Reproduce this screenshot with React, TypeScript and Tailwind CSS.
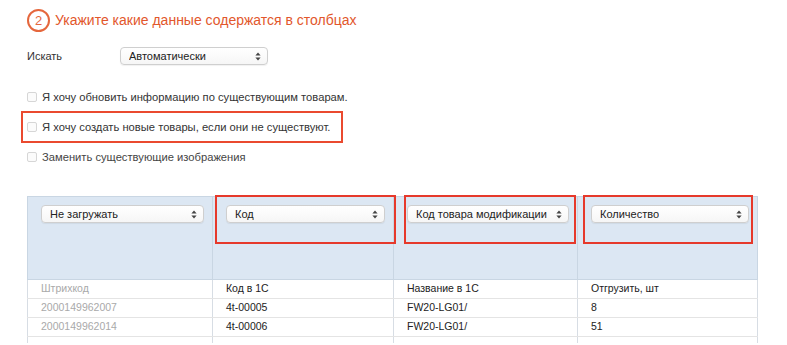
import type { ReactNode } from 'react'

// ── Small pieces ──────────────────────────────────────────────────────────────

function Arrows() {
  return (
    <svg width="6" height="9" viewBox="0 0 6 9" className="shrink-0">
      <path d="M3 0.5 L5.6 3.6 H0.4 Z" fill="#444" />
      <path d="M3 8.5 L5.6 5.4 H0.4 Z" fill="#444" />
    </svg>
  )
}

function Select({ value, className = '' }: { value: string; className?: string }) {
  return (
    <div
      className={`flex h-[18px] items-center justify-between rounded-[4px] border border-[#cfcfcf] bg-gradient-to-b from-white to-[#f6f6f6] pl-[8px] pr-[6px] text-[11px] text-[#222] shadow-[0_1px_1px_rgba(0,0,0,0.06)] ${className}`}
    >
      <span className="truncate">{value}</span>
      <Arrows />
    </div>
  )
}

function Check({ children }: { children: ReactNode }) {
  return (
    <label className="flex h-[14px] items-center gap-[5px] text-[11.2px] text-[#333]">
      <span className="h-[10px] w-[10px] shrink-0 rounded-[2px] border border-[#d6d6d6] bg-[#fbfbfb]" />
      {children}
    </label>
  )
}

// ── Data ──────────────────────────────────────────────────────────────────────

const columns = [
  { value: 'Не загружать', width: 'w-[185px]', box: null },
  { value: 'Код', width: 'w-[181px]', box: 'left-[2px] right-[-3px]' },
  { value: 'Код товара модификации', width: 'w-[184px]', box: 'left-[10px] right-[1px]' },
  { value: 'Количество', width: 'w-[180px]', box: 'left-[5px] right-[4px]' },
]

const rows = [
  ['Штрихкод', 'Код в 1С', 'Название в 1С', 'Отгрузить, шт'],
  ['2000149962007', '4t-00005', 'FW20-LG01/', '8'],
  ['2000149962014', '4t-00006', 'FW20-LG01/', '51'],
]

// ── Component ─────────────────────────────────────────────────────────────────

export default function App() {
  return (
    <div className="h-[345px] w-[787px] overflow-hidden bg-white pl-[27px] pt-[9px] font-['Liberation_Sans',Arial,sans-serif]">
      {/* Step title */}
      <div className="flex h-[23px] items-center gap-[5px]">
        <span className="flex h-[23px] w-[23px] items-center justify-center rounded-full border-2 border-[#e5673d] text-[13px] text-[#e5673d]">
          2
        </span>
        <h2 className="text-[14px] text-[#e2572c]">Укажите какие данные содержатся в столбцах</h2>
      </div>

      {/* Search mode */}
      <div className="mt-[15px] flex items-center">
        <span className="w-[93px] text-[11px] text-[#333]">Искать</span>
        <Select value="Автоматически" className="w-[148px]" />
      </div>

      {/* Options */}
      <div className="mt-[25px] flex flex-col gap-[16px]">
        <Check>Я хочу обновить информацию по существующим товарам.</Check>
        <div className="relative">
          <Check>Я хочу создать новые товары, если они не существуют.</Check>
          <div className="absolute left-[-6px] top-[-9px] h-[32px] w-[322px] border-2 border-[#ea4a2f]" />
        </div>
        <Check>
          <span className="text-[#444]">Заменить существующие изображения</span>
        </Check>
      </div>

      {/* Column mapping table */}
      <table className="mt-[32px] w-[730px] table-fixed border-collapse text-[10.5px]">
        <thead>
          <tr>
            {columns.map((c, i) => (
              <th
                key={i}
                className={`relative h-[83px] border border-[#c9d6e3] bg-[#dce7f3] p-0 align-top font-normal ${c.width}`}
              >
                <div className="pl-[13px] pr-[8px] pt-[8px]">
                  <Select value={c.value} className="text-left" />
                </div>
                {c.box && (
                  <div className={`absolute top-[-2px] z-10 h-[49px] border-2 border-[#e6392b] ${c.box}`} />
                )}
              </th>
            ))}
          </tr>
        </thead>
        <tbody>
          {rows.map((r, ri) => (
            <tr key={ri} className="h-[19px]">
              {r.map((cell, ci) => (
                <td
                  key={ci}
                  className={`border-x border-b border-x-[#d7dde4] border-b-[#e4e4e4] py-0 pl-[13px] ${
                    ci === 0 ? 'text-[#a9a9a9]' : 'text-[#222]'
                  }`}
                >
                  {cell}
                </td>
              ))}
            </tr>
          ))}
          <tr className="h-[6px]">
            {columns.map((_, ci) => (
              <td key={ci} className="border-x border-x-[#d7dde4] p-0" />
            ))}
          </tr>
        </tbody>
      </table>
    </div>
  )
}
